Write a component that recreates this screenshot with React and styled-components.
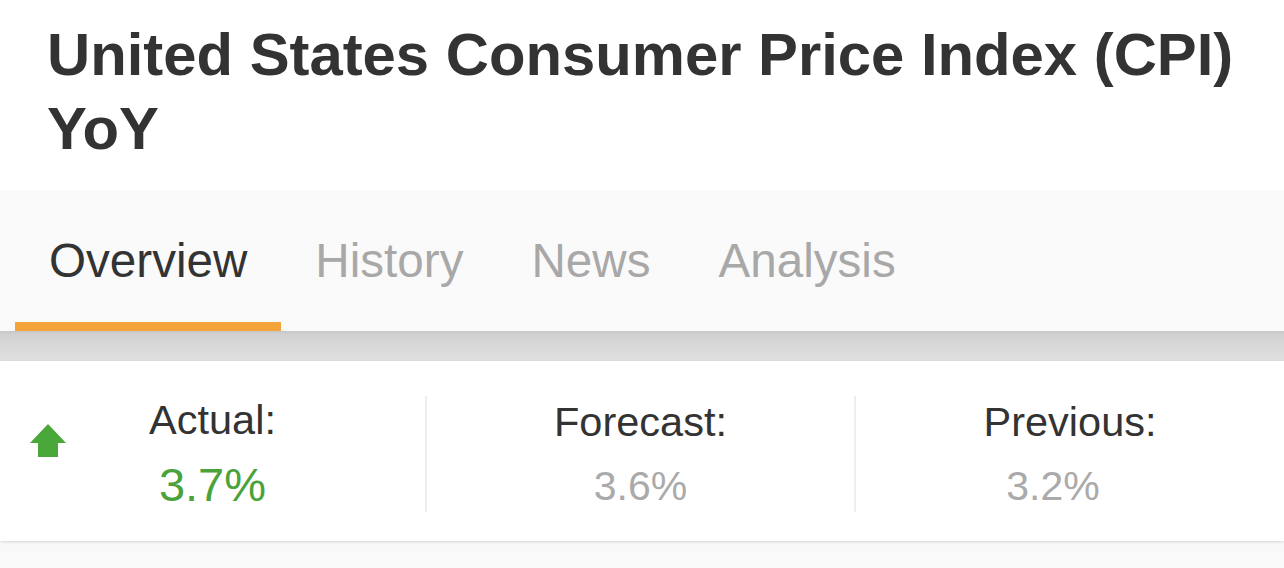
import styled, { createGlobalStyle } from 'styled-components';

const GlobalStyle = createGlobalStyle`
  html, body {
    margin: 0;
    padding: 0;
    background: #f9f9f9;
    font-family: 'Liberation Sans', Arial, sans-serif;
  }
`;

const tabs = ['Overview', 'History', 'News', 'Analysis'];

const stats = [
  { label: 'Actual:', value: '3.7%', main: true },
  { label: 'Forecast:', value: '3.6%' },
  { label: 'Previous:', value: '3.2%', offset: 34 },
];

export default function App() {
  return (
    <Page>
      <GlobalStyle />
      <Header>
        <Title>United States Consumer Price Index (CPI) YoY</Title>
      </Header>

      <TabBar>
        {tabs.map((t, i) => (
          <Tab key={t} active={i === 0}>
            {t}
          </Tab>
        ))}
      </TabBar>
      <Shade />

      <Card>
        {stats.map((s, i) => (
          <Cell key={s.label} last={i === stats.length - 1}>
            {s.main && (
              <Arrow viewBox="0 0 36 33">
                <path d="M18 0 L36 19 L28 19 L28 33 L8 33 L8 19 L0 19 Z" fill="#4aa83a" />
              </Arrow>
            )}
            <Label main={s.main}>{s.label}</Label>
            <Value main={s.main} offset={s.offset}>
              {s.value}
            </Value>
          </Cell>
        ))}
      </Card>
    </Page>
  );
}

const Page = styled.div`
  width: 1284px;
  min-height: 568px;
`;

const Header = styled.div`
  background: #fff;
  padding: 18px 20px 24px 47px;
`;

const Title = styled.h1`
  margin: 0;
  font-size: 59.8px;
  line-height: 74px;
  font-weight: 700;
  color: #333;
`;

const TabBar = styled.div`
  display: flex;
  background: #fafafa;
  padding-left: 15px;
`;

const Tab = styled.div`
  padding: 43px 34px 33px;
  font-size: 47.6px;
  line-height: 56px;
  color: ${(p) => (p.active ? '#333' : '#a8a8a8')};
  border-bottom: 9px solid ${(p) => (p.active ? '#f5a33b' : 'transparent')};
`;

const Shade = styled.div`
  height: 30px;
  background: linear-gradient(#c6c6c6 0, #d0d0d0 10%, #d8d8d8 50%, #e0e0e0 100%);
`;

const Card = styled.div`
  display: grid;
  grid-template-columns: 427px 429px 1fr;
  background: #fff;
  padding: 35px 0 29px;
  box-shadow: 0 1px 3px rgba(0, 0, 0, 0.14);
`;

const Cell = styled.div`
  position: relative;
  height: 116px;
  display: flex;
  flex-direction: column;
  align-items: center;
  justify-content: center;
  gap: 16px;
  border-right: ${(p) => (p.last ? 'none' : '2px solid #eeeeee')};
`;

const Arrow = styled.svg`
  position: absolute;
  left: 30px;
  top: 28px;
  width: 36px;
  height: 33px;
`;

const Label = styled.div`
  font-size: 41.5px;
  line-height: 49px;
  color: #333;
  margin-top: ${(p) => (p.main ? '-4px' : '0')};
`;

const Value = styled.div`
  font-size: ${(p) => (p.main ? '47px' : '41px')};
  line-height: 49px;
  color: ${(p) => (p.main ? '#4aa33a' : '#aaaaaa')};
  margin-right: ${(p) => (p.offset ? `${p.offset}px` : '0')};
`;
